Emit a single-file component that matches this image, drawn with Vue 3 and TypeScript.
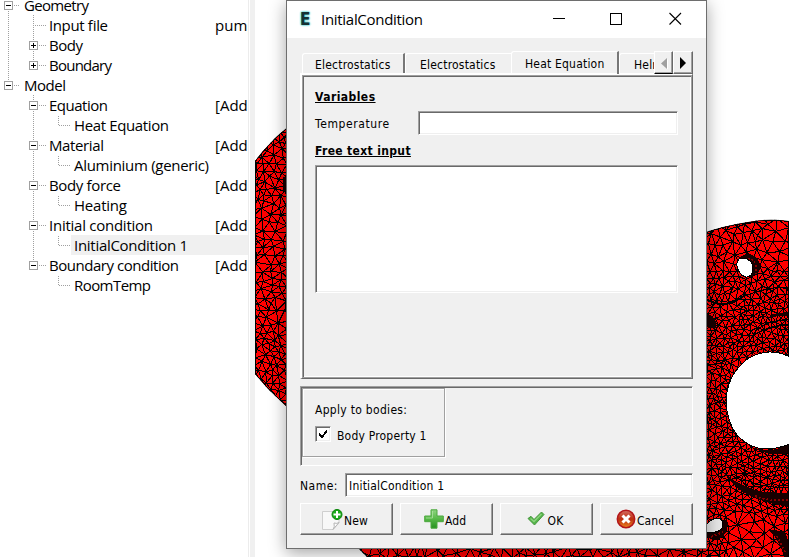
<script setup lang="ts">
interface TreeRow {
  label: string
  level: number
  box?: '-' | '+'
  value?: string
  selected?: boolean
  lines: string
  width: number
}

// Connector lines are drawn in each row's own gutter
const leaf = 'M58.5 1V10M59 10.5H71'
const rows: TreeRow[] = [
  { label: 'Geometry', level: 0, box: '-', lines: 'M8.5 0V20M14 10.5H20', width: 65 },
  { label: 'Input file', level: 1, value: 'pump', lines: 'M8.5 0V20M33.5 0V20M35 10.5H46', width: 59 },
  { label: 'Body', level: 1, box: '+', lines: 'M8.5 0V20M33.5 0V20M39 10.5H46', width: 34 },
  { label: 'Boundary', level: 1, box: '+', lines: 'M8.5 0V20M33.5 0V10M39 10.5H46', width: 63 },
  { label: 'Model', level: 0, box: '-', lines: 'M8.5 0V10M14 10.5H20', width: 42 },
  { label: 'Equation', level: 1, box: '-', value: '[Add', lines: 'M33.5 0V20M39 10.5H46', width: 59 },
  { label: 'Heat Equation', level: 2, lines: 'M33.5 0V20' + leaf, width: 95 },
  { label: 'Material', level: 1, box: '-', value: '[Add', lines: 'M33.5 0V20M39 10.5H46', width: 55 },
  { label: 'Aluminium (generic)', level: 2, lines: 'M33.5 0V20' + leaf, width: 135 },
  { label: 'Body force', level: 1, box: '-', value: '[Add', lines: 'M33.5 0V20M39 10.5H46', width: 72 },
  { label: 'Heating', level: 2, lines: 'M33.5 0V20' + leaf, width: 53 },
  { label: 'Initial condition', level: 1, box: '-', value: '[Add', lines: 'M33.5 0V20M39 10.5H46', width: 104 },
  { label: 'InitialCondition 1', level: 2, selected: true, lines: 'M33.5 0V20' + leaf, width: 114 },
  { label: 'Boundary condition', level: 1, box: '-', value: '[Add', lines: 'M33.5 0V10M39 10.5H46', width: 130 },
  { label: 'RoomTemp', level: 2, lines: leaf, width: 77 },
]

// Deterministic random source so the surface mesh is stable
let seed = 20117
const rnd = (): number => {
  seed = (seed * 1664525 + 1013904223) % 4294967296
  return seed / 4294967296
}

type P = [number, number]

const spacing = (x: number, y: number): number => {
  if (x < 300) return y > 200 && y < 330 ? 6.6 : 5.8
  if (y > 544 && x < 700) return 7.5
  const d = Math.hypot(x - 770, y - 400)
  if (y > 515 && x > 730) return 9
  if (y < 270) return x > 765 ? 10 : 6.8
  if (d < 100) return 4.3
  return 5.2
}

function scatter(): P[] {
  const pts: P[] = []
  const fill = (x0: number, y0: number, x1: number, y1: number, tries: number) => {
    const start = pts.length
    for (let i = 0; i < tries; i++) {
      const x = x0 + rnd() * (x1 - x0)
      const y = y0 + rnd() * (y1 - y0)
      const h = spacing(x, y)
      let ok = true
      for (let k = start; k < pts.length; k++) {
        const dx = pts[k][0] - x
        const dy = pts[k][1] - y
        if (dx * dx + dy * dy < h * h) { ok = false; break }
      }
      if (ok) pts.push([x, y])
    }
  }
  fill(248, 120, 296, 416, 4000)
  fill(340, 532, 698, 566, 3000)
  fill(700, 212, 797, 565, 15000)
  return pts
}

// Bowyer-Watson triangulation
function triangulate(pts: P[]): string {
  const all: P[] = [...pts, [-4000, -3000], [5000, -3000], [500, 6000]]
  type T = { v: number[]; x: number; y: number; r: number }
  const make = (a: number, b: number, c: number): T => {
    const [ax, ay] = all[a], [bx, by] = all[b], [cx, cy] = all[c]
    const d = 2 * (ax * (by - cy) + bx * (cy - ay) + cx * (ay - by))
    const A = ax * ax + ay * ay, B = bx * bx + by * by, C = cx * cx + cy * cy
    const x = (A * (by - cy) + B * (cy - ay) + C * (ay - by)) / d
    const y = (A * (cx - bx) + B * (ax - cx) + C * (bx - ax)) / d
    return { v: [a, b, c], x, y, r: (ax - x) ** 2 + (ay - y) ** 2 }
  }
  const n = pts.length
  let tris: T[] = [make(n, n + 1, n + 2)]
  for (let i = 0; i < n; i++) {
    const [px, py] = all[i]
    const edges = new Map<number, number[]>()
    const keep: T[] = []
    for (const t of tris) {
      if ((px - t.x) ** 2 + (py - t.y) ** 2 < t.r) {
        for (let e = 0; e < 3; e++) {
          const a = t.v[e], b = t.v[(e + 1) % 3]
          const key = Math.min(a, b) * 10000 + Math.max(a, b)
          if (edges.has(key)) edges.delete(key)
          else edges.set(key, [a, b])
        }
      } else keep.push(t)
    }
    edges.forEach(([a, b]) => keep.push(make(a, b, i)))
    tris = keep
  }
  const seen = new Set<number>()
  let d = ''
  for (const t of tris) {
    for (let e = 0; e < 3; e++) {
      const a = Math.min(t.v[e], t.v[(e + 1) % 3])
      const b = Math.max(t.v[e], t.v[(e + 1) % 3])
      const key = a * 10000 + b
      if (b >= n || seen.has(key)) continue
      seen.add(key)
      const p = all[a], q = all[b]
      if (Math.hypot(p[0] - q[0], p[1] - q[1]) > 24) continue
      d += `M${p[0].toFixed(1)} ${p[1].toFixed(1)}L${q[0].toFixed(1)} ${q[1].toFixed(1)}`
    }
  }
  return d
}

const mesh = triangulate(scatter())
const outline =
  'M290 125L276 137L262 152L255 161V374L268 389L290 410L345 535L368 558H789V221Q768 218 748 222Q722 226 700 234Z'
</script>

<template>
  <main class="screen">
    <aside class="tree">
      <div v-for="(r, i) in rows" :key="i" class="row">
        <svg class="gutter" :class="'g' + r.level" height="20" shape-rendering="crispEdges">
          <path :d="r.lines" class="dots" />
          <g v-if="r.box" :transform="`translate(${4 + r.level * 25} 6)`">
            <rect x=".5" y=".5" width="8" height="8" fill="#fff" stroke="#a0a0a0" />
            <path :d="r.box === '+' ? 'M2 4.5H7M4.5 2V7' : 'M2 4.5H7'" stroke="#000" />
          </g>
        </svg>
        <span class="cell" :class="{ selected: r.selected }">
          <svg class="label" :width="r.width + 4" height="20"><text x="3" y="16" :textLength="r.width">{{ r.label }}</text></svg>
        </span>
        <span v-if="r.value" class="value">{{ r.value }}</span>
      </div>
    </aside>
    <div class="splitter"></div>
    <section class="viewer">
      <svg width="534" height="557" viewBox="255 0 534 557">
        <defs><clipPath id="part"><path :d="outline" /></clipPath></defs>
        <g clip-path="url(#part)" shape-rendering="crispEdges">
          <path :d="outline" fill="#f00" />
          <path :d="mesh" fill="none" stroke="#000" stroke-width="1" />
          <g fill="#180000">
            <path d="M740 257Q748 251 756 257Q764 266 757 274L750 277Z" />
            <path d="M706 314L712 316Q719 322 715 329L706 327Z" />
            <path d="M283 177h5v14h-5z" />
            <path d="M724 473Q742 488 764 492L789 493V507Q756 502 737 488Z" />
            <path d="M745 444Q768 456 789 444V453Q768 458 745 444Z" />
            <path d="M770 315Q779 312 789 312V316Q779 315 770 318Z" />
            <path d="M706 529L727 519Q730 533 718 540Q710 541 706 535Z" />
            <path d="M769 530L784 531Q789 540 789 546V557H784Q780 541 769 530Z" />
          </g>
          <g fill="none" stroke="#000">
            <path d="M706 299Q725 311 745 295" stroke-width="2" />
            <path d="M745 296Q765 287 789 287" />
            <path d="M755 331Q770 319 789 320M752 336Q768 325 789 325" />
            <path d="M738 467Q760 480 789 481M735 475Q758 488 789 488" />
          </g>
          <path d="M755 496Q770 502 789 500M745 262l5-4 5 4M756 265v9M711 537l12-5M777 536l8 16" stroke="#8b0000" stroke-width="2" stroke-dasharray="2 2" fill="none" />
          <path :d="outline" fill="none" stroke="#000" stroke-width="2" />
        </g>
        <g fill="#fff" stroke="#000" shape-rendering="crispEdges">
          <path d="M790 357Q779 351.500 769 352Q752 353 742 364Q727 378 726 401Q727 422 737 435Q749 448 764 449Q778 449 790 444V357Z" />
          <path d="M739 259Q745 256 751 262Q755 268 751 275Q746 280 740 273Q734 264 739 259Z" />
          <path d="M706 525Q711 518 719 518Q725 521 722 528Q717 534 706 532Z" fill="#e8e8e8" />
        </g>
      </svg>
    </section>

    <section class="dialog">
      <header class="title">
        <b class="logo">E</b>
        <svg width="108" height="24"><text x="1" y="17" textLength="102">InitialCondition</text></svg>
        <svg class="winbtns" width="132" height="20" fill="none" stroke="#000">
          <path d="M.5 9.500H12.500M58.500 4.500h11v11h-11z" shape-rendering="crispEdges" />
          <path d="M117.500 4L129 15.500M129 4L117.500 15.500" stroke-width="1.1" />
        </svg>
      </header>
      <div class="body">
        <nav class="tabs">
          <span class="tab first"><i>Electrostatics</i></span>
          <span class="tab second"><i>Electrostatics</i></span>
          <span class="tab active"><i>Heat Equation</i></span>
          <span class="tab cut"><i>Helmholtz</i></span>
          <span class="scroll left"><svg width="8" height="12"><path d="M8 2V13L2 7.500Z" fill="#fff" /><path d="M7 1V12L1 6.500Z" fill="#a0a0a0" /></svg></span>
          <span class="scroll right"><svg width="8" height="12"><path d="M1 0V12L7 6Z" fill="#000" /></svg></span>
        </nav>
        <div class="page">
          <div class="inner">
            <h3 class="vars">Variables</h3>
            <div class="field"><label>Temperature</label><span class="sunken temp"></span></div>
            <h3 class="free">Free text input</h3>
            <div class="sunken area"></div>
          </div>
        </div>
        <div class="apply">
          <div class="bodies">
            <p>Apply to bodies:</p>
            <div class="check">
              <span class="sunken box"><svg width="12" height="12" shape-rendering="crispEdges"><path d="M2 4.500L5 7.500L10 1.500V4.500L5 10.500L2 7.500Z" /></svg></span>
              <span class="checklabel">Body Property 1</span>
            </div>
          </div>
        </div>
        <div class="name"><label>Name:</label><span class="sunken namebox">InitialCondition 1</span></div>
        <footer class="buttons">
          <button>
            <svg width="21" height="21" viewBox="0 0 21 21">
              <path d="M.5 2.500H17V14L11 20.500H.5Z" fill="#f8f8f8" stroke="#cfcfcf" />
              <path d="M11 20.500Q13 18 12 14Q15 15 17 13.500Z" fill="#fff" stroke="#b5b5b5" />
              <circle cx="15" cy="5.500" r="5" fill="#19aa19" stroke="#078207" />
              <path d="M15 2v7M11.500 5.500h7" stroke="#fff" stroke-width="2" />
            </svg><span>New</span>
          </button>
          <button>
            <svg width="20" height="20" viewBox="0 0 20 20">
              <defs><linearGradient id="plus" x2="0" y2="1"><stop stop-color="#8fd480" /><stop offset=".5" stop-color="#57b847" /><stop offset="1" stop-color="#269120" /></linearGradient></defs>
              <path d="M7 .8H13V7H19.300V12.700H13V19.200H7V12.700H.7V7H7Z" fill="url(#plus)" stroke="#4ca83e" stroke-linejoin="round" />
              <path d="M8.500 2V9H2" fill="none" stroke="#b5e5a8" opacity=".7" />
            </svg><span>Add</span>
          </button>
          <button class="ok">
            <svg width="18" height="16" viewBox="0 0 18 16">
              <path d="M1 7.500L4 5.300L7 8.500L14.500 1L17 3.500L7.500 14Z" fill="#53b448" stroke="#48963f" stroke-linejoin="round" />
              <path d="M3.500 7.500L7 10.500L14.500 3" fill="none" stroke="#8bd37c" stroke-width="1.500" />
            </svg><span>OK</span>
          </button>
          <button>
            <svg width="20" height="20" viewBox="0 0 20 20">
              <defs><linearGradient id="stop" x2="0" y2="1"><stop stop-color="#d46d62" /><stop offset=".5" stop-color="#bd2d10" /><stop offset="1" stop-color="#e98420" /></linearGradient></defs>
              <circle cx="10" cy="10" r="8.700" fill="url(#stop)" stroke="#b3161a" stroke-width="1.500" />
              <path d="M6.500 6.500L13.500 13.500M13.500 6.500L6.500 13.500" stroke="#fff" stroke-width="3" />
            </svg><span>Cancel</span>
          </button>
        </footer>
      </div>
    </section>
  </main>
</template>

<style>
body { margin: 0; overflow: hidden; }
</style>

<style scoped>
* { box-sizing: border-box; }
.screen { position: relative; display: flex; width: 789px; height: 557px; overflow: hidden; background: #fff; color: #000; font: 12px 'DejaVu Sans Condensed', 'DejaVu Sans', sans-serif; letter-spacing: .2px; }
.tree { width: 248px; margin-top: -5px; flex: none; overflow: hidden; font: 15px 'Open Sans', 'Noto Sans', sans-serif; letter-spacing: 0; }
.row { display: flex; height: 20px; }
.gutter { flex: none; display: block; }
.g0 { width: 21px; }
.g1 { width: 46px; }
.g2 { width: 71px; }
.dots { fill: none; stroke: #a0a0a0; stroke-dasharray: 1 1; }
.cell { flex: 1; height: 20px; }
.selected { background: #f0f0f0; }
.label { display: block; overflow: visible; }
.value { width: 33px; flex: none; line-height: 21px; white-space: nowrap; overflow: hidden; }
.splitter { width: 7px; flex: none; background: #f0f0f0; border-left: 1px solid #ececec; box-shadow: inset 1px 0 #fff; }
.viewer { width: 534px; flex: none; }
.viewer svg { display: block; }
.dialog { position: absolute; left: 286px; top: 0; width: 421px; height: 549px; background: #f0f0f0; border: 1px solid #6e6e6e; box-shadow: 0 4px 16px rgba(0, 0, 0, .36); }
.title { height: 37px; background: #fff; display: flex; align-items: center; padding-left: 13px; font: 15px 'Open Sans', 'Noto Sans', sans-serif; letter-spacing: 0; }
.logo { width: 20px; font: 900 17px/18px 'DejaVu Sans Condensed', sans-serif; padding-bottom: 2px; color: #163033; text-shadow: 0 0 2px #2cc9c9, 0 0 2px #2cc9c9; }
.winbtns { margin-left: 124px; margin-top: -1px; }
.body { padding: 13px 13px 0; }
.tabs { height: 22px; display: flex; align-items: flex-end; padding-left: 2px; }
i { font-style: normal; white-space: nowrap; }
.tab { height: 20px; border-left: 1px solid #fff; border-top: 1px solid #fff; border-radius: 3px 0 0; padding: 4px 0 0 12px; line-height: 15px; overflow: hidden; flex: none; }
.first { width: 103px; border-right: 2px solid #777; }
.second { width: 106px; padding-left: 14px; }
.active { height: 23px; width: 108px; padding-top: 5px; padding-left: 13px; border-right: 2px solid #777; margin-bottom: -1px; }
.cut { width: 35px; padding-left: 14px; }
.scroll { flex: none; width: 19px; height: 23px; margin-bottom: -1px; background: #f0f0f0; border: 1px solid #fff; border-right-color: #696969; border-bottom-color: #696969; box-shadow: inset -1px -1px #a0a0a0; display: flex; align-items: center; justify-content: center; z-index: 1; }
.scroll.left { border-bottom-color: #000; }
.scroll.right { width: 20px; }
.page { height: 306px; border: 2px solid; border-width: 2px 1px 1px 2px; border-color: #fff #696969 #696969 #fff; box-shadow: inset -1px -1px #a0a0a0; }
.inner { height: 302px; width: 389px; border-top: 1px solid #a0a0a0; border-left: 1px solid #a0a0a0; box-shadow: inset 1px 1px #696969, inset -1px -1px #fff; padding: 13px 12px 0; }
h3 { margin: 0; font-size: 12px; line-height: 16px; text-decoration: underline; text-underline-offset: 1px; letter-spacing: .45px; }
.field { height: 24px; margin-top: 6px; display: flex; align-items: center; }
.field label { width: 103px; padding-top: 2px; letter-spacing: .6px; }
.sunken { background: #fff; border: 1px solid; border-color: #a0a0a0 #fff #fff #a0a0a0; box-shadow: inset 1px 1px #696969, inset -1px -1px #efefef; }
.temp { width: 260px; height: 24px; }
.free { margin-top: 8px; letter-spacing: .35px; }
.area { height: 128px; width: 363px; margin-top: 6px; }
.apply { height: 80px; margin-top: 7px; border: 1px solid; border-color: #a0a0a0 #fff #fff #a0a0a0; box-shadow: inset 1px 1px #696969; padding: 1px; }
.bodies { width: 143px; height: 69px; border: 1px solid #a0a0a0; box-shadow: inset 1px 1px #fff, 1px 1px #fff; padding: 13px 12px; }
.bodies p { margin: 0; line-height: 16px; letter-spacing: .3px; }
.check { display: flex; align-items: center; height: 16px; gap: 6px; margin-top: 8px; }
.checklabel { padding-top: 3px; }
.box { width: 16px; height: 16px; flex: none; padding: 1px; }
.box svg { display: block; }
.name { height: 24px; margin-top: 7px; display: flex; align-items: center; }
.name label { width: 45px; padding-top: 2px; letter-spacing: .5px; }
.namebox { width: 348px; height: 24px; line-height: 24px; padding-left: 3px; }
.buttons { display: flex; gap: 7px; margin-top: 6px; }
button { width: 93px; height: 32px; padding: 0 3px 0 0; color: #000; font: inherit; letter-spacing: .1px; background: #f0f0f0; border: 1px solid; border-color: #fff #696969 #696969 #fff; box-shadow: inset -1px -1px #a0a0a0; display: flex; align-items: center; justify-content: center; gap: 1px; }
button span { padding-top: 3px; }
.ok { gap: 3px; }
</style>
